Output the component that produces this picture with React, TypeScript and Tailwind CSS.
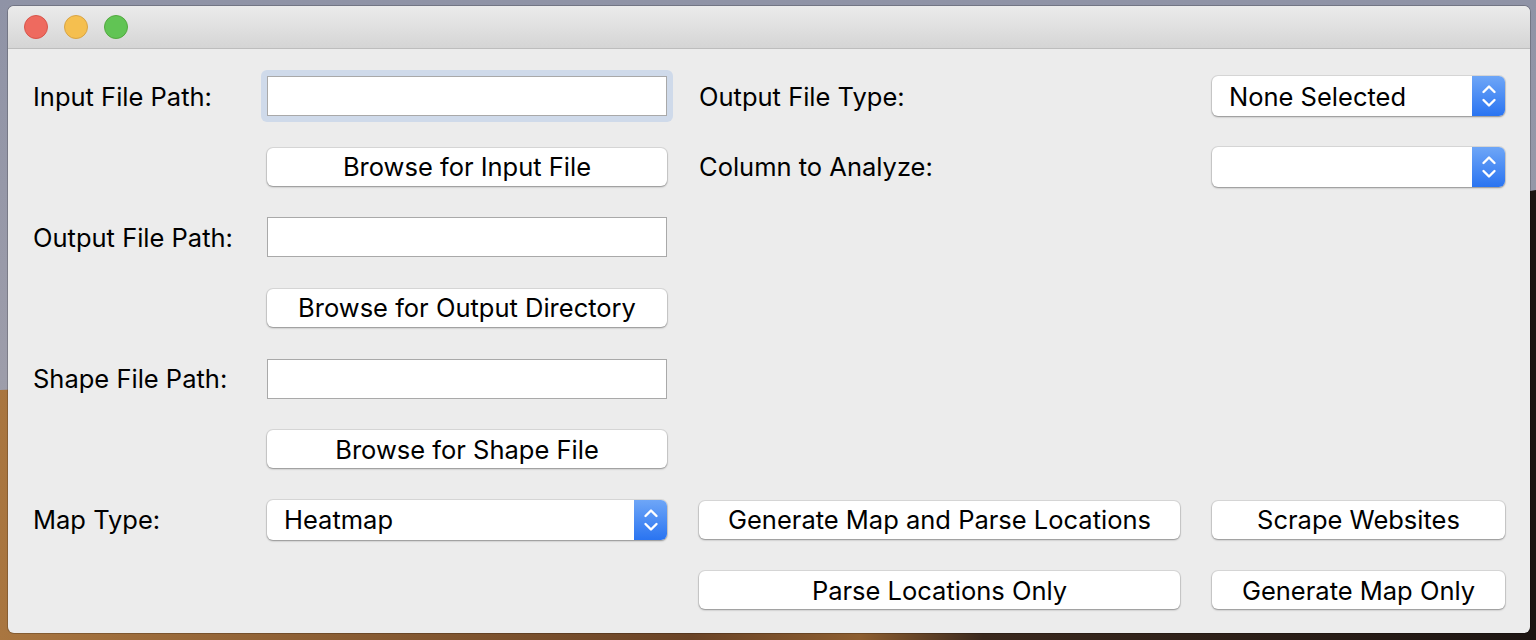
import React from 'react';

const font = { fontFamily: 'Inter, "Noto Sans", sans-serif' };

const Label: React.FC<{ text: string }> = ({ text }) => (
  <div className="text-[25.5px] text-black leading-none whitespace-nowrap">{text}</div>
);

const Field: React.FC<{ focused?: boolean }> = ({ focused }) => (
  <div className={focused ? 'rounded-[6px] bg-[#cfdaea] p-[6px] -m-[6px]' : ''}>
    <div className="h-[40px] bg-white border border-[#a9a9a9]" />
  </div>
);

const Button: React.FC<{ text: string }> = ({ text }) => (
  <button className="h-[38px] w-full bg-white rounded-[6px] text-[25.5px] text-black leading-none whitespace-nowrap shadow-[0_0_0_1px_rgba(0,0,0,0.08),0_1px_2px_rgba(0,0,0,0.35)]">
    {text}
  </button>
);

const Chevrons = () => (
  <svg width="16" height="26" viewBox="0 0 16 26" fill="none" stroke="white" strokeWidth="2.4" strokeLinecap="round" strokeLinejoin="round">
    <path d="M2.5 9 L8 3.5 L13.5 9" />
    <path d="M2.5 17 L8 22.5 L13.5 17" />
  </svg>
);

const Select: React.FC<{ value?: string }> = ({ value }) => (
  <div className="h-[40px] w-full flex bg-white rounded-[6px] overflow-hidden shadow-[0_0_0_1px_rgba(0,0,0,0.08),0_1px_2px_rgba(0,0,0,0.35)]">
    <div className="flex-1 flex items-center pl-[17px] text-[25.5px] text-black leading-none whitespace-nowrap">{value}</div>
    <div className="w-[33px] flex items-center justify-center bg-[linear-gradient(#6ea6f7,#2a74f1)]">
      <Chevrons />
    </div>
  </div>
);

const Wallpaper = () => (
  <svg className="absolute inset-0 w-full h-full" viewBox="0 0 1536 640" preserveAspectRatio="none">
    <defs>
      <linearGradient id="sky" x1="0" y1="0" x2="0" y2="1">
        <stop offset="0" stopColor="#8f93a6" />
        <stop offset="1" stopColor="#a7a4ad" />
      </linearGradient>
      <linearGradient id="dune" x1="0" y1="0" x2="1" y2="0">
        <stop offset="0" stopColor="#a97640" />
        <stop offset="0.45" stopColor="#6a4326" />
        <stop offset="0.56" stopColor="#8d5e30" />
        <stop offset="0.64" stopColor="#3a281d" />
        <stop offset="1" stopColor="#1d1512" />
      </linearGradient>
    </defs>
    <rect width="1536" height="640" fill="url(#sky)" />
    <path d="M0 390 C 300 380 900 300 1536 190 L1536 640 L0 640 Z" fill="url(#dune)" />
  </svg>
);

export default function App() {
  return (
    <div className="relative h-[640px] w-full overflow-hidden pt-[6px] pl-[8px] pr-[6px] pb-[7px]" style={font}>
      <Wallpaper />
      <div className="relative h-full rounded-[6px] overflow-hidden bg-[#ececec] flex flex-col shadow-[0_0_0_1px_rgba(0,0,0,0.2)]">
        {/* Title bar */}
        <div className="h-[43px] shrink-0 flex items-center gap-[16px] pl-[16px] bg-[linear-gradient(#ebebeb,#d5d5d5)] border-b border-[#bdbdbd]">
          <span className="w-[24px] h-[24px] rounded-full bg-[#ee6a5f] border border-[#d8554b]" />
          <span className="w-[24px] h-[24px] rounded-full bg-[#f5bf4f] border border-[#d8a445]" />
          <span className="w-[24px] h-[24px] rounded-full bg-[#61c454] border border-[#52a93f]" />
        </div>

        {/* Form */}
        <div className="pt-[12px] pl-[25px] grid grid-cols-[202px_400px_481px_293px] gap-x-[32px] auto-rows-[70.6px] items-center">
          <Label text="Input File Path:" />
          <Field focused />
          <Label text="Output File Type:" />
          <Select value="None Selected" />

          <div />
          <Button text="Browse for Input File" />
          <Label text="Column to Analyze:" />
          <Select />

          <Label text="Output File Path:" />
          <Field />
          <div />
          <div />

          <div />
          <Button text="Browse for Output Directory" />
          <div />
          <div />

          <Label text="Shape File Path:" />
          <Field />
          <div />
          <div />

          <div />
          <Button text="Browse for Shape File" />
          <div />
          <div />

          <Label text="Map Type:" />
          <Select value="Heatmap" />
          <Button text="Generate Map and Parse Locations" />
          <Button text="Scrape Websites" />

          <div />
          <div />
          <Button text="Parse Locations Only" />
          <Button text="Generate Map Only" />
        </div>
      </div>
    </div>
  );
}
